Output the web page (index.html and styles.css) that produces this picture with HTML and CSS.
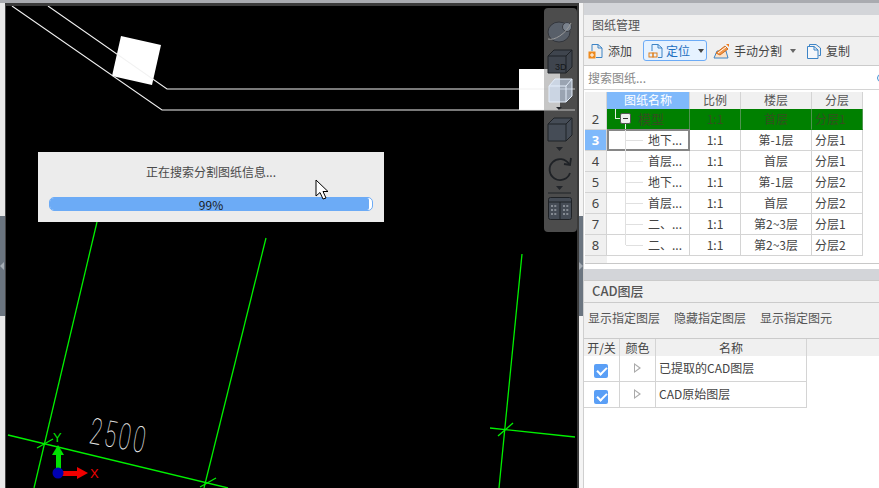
FILE: index.html
```html
<!DOCTYPE html>
<html lang="zh">
<head>
<meta charset="utf-8">
<title>图纸管理</title>
<link rel="stylesheet" href="styles.css">
</head>
<body>
<div class="app">
  <div class="topline"></div>
  <div class="main">
    <div class="gutter gutter-left"><div class="handle"><span class="handle-arrow arrow-left"></span></div></div>

    <div class="canvas">
      <svg class="drawing" viewBox="6 6 571 482" width="571" height="482">
        <rect x="519" y="69" width="41" height="41" fill="#fff"/>
        <polygon points="121,36 161,45 152,85 112,76" fill="#fff"/>
        <g fill="none" stroke="#f2f2f2" stroke-width="1.100">
          <polyline points="12,6 162,110 575,110"/>
          <polyline points="48,6 167,89 575,89"/>
        </g>
        <g fill="none" stroke="#00f000" stroke-width="1.300">
          <line x1="97" y1="222" x2="34" y2="488"/>
          <line x1="266" y1="238" x2="204" y2="488"/>
          <line x1="522" y1="254" x2="499" y2="488"/>
          <line x1="8" y1="435" x2="228" y2="488"/>
          <line x1="490" y1="428" x2="575" y2="437"/>
          <line x1="37" y1="448" x2="53" y2="439"/>
          <line x1="200" y1="487" x2="216" y2="478"/>
          <line x1="498" y1="436" x2="513" y2="423"/>
        </g>
        <text class="dim-text" transform="translate(88 443) rotate(10) scale(.85 1.4)">2500</text>
        <rect x="56" y="450" width="5" height="20" fill="#00e000"/>
        <polygon points="58,445 52,455 64,455" fill="#00e000"/>
        <rect x="60" y="471" width="20" height="5" fill="#f00000"/>
        <polygon points="88,473 77,467 77,479" fill="#f00000"/>
        <circle cx="58" cy="473" r="5.500" fill="#0000b4"/>
        <text class="axis axis-y" x="53" y="442">Y</text>
        <text class="axis axis-x" x="90" y="478">X</text>
      </svg>

      <div class="tools">
        <svg class="tool-icons" viewBox="0 0 33 224" width="33" height="224">
          <ellipse cx="15" cy="24" rx="11" ry="10" fill="#585f69" stroke="#33363c"/>
          <circle cx="23" cy="19" r="4.500" fill="#7a828d" stroke="#3a3d43"/>
          <path d="M4 31 C10 33 22 26 27 15" fill="none" stroke="#9a9a9a"/>
          <g stroke="#1f2226" stroke-width="1">
            <path d="M4 48 L10 42 H28 V59 L22 65 H4 Z" fill="#3f454e"/>
            <path d="M4 48 H22 V65 M22 48 L28 42" fill="none"/>
          </g>
          <text class="tool-3d" x="11" y="62">3D</text>
          <g stroke="#e4eefb" stroke-width="1">
            <path d="M5 78 L11 71 H28 V88 L22 94 H5 Z" fill="#cfe0f7" fill-opacity=".6"/>
            <path d="M5 78 H22 V94 M22 78 L28 71" fill="none"/>
          </g>
          <path d="M12 99 H18 L15 102 Z" fill="#22252a"/>
          <g stroke="#1f2226" stroke-width="1">
            <path d="M4 116 L10 110 H28 V127 L22 133 H4 Z" fill="#454c56"/>
            <path d="M4 116 H22 V133 M22 116 L28 110" fill="none"/>
          </g>
          <path d="M12 139 H19 L15.500 143 Z" fill="#22252a"/>
          <path d="M25 156 A10.500 10.500 0 1 0 26 165" fill="none" stroke="#1f2226" stroke-width="1.800"/>
          <path d="M20 156 L26 157 L27 150" fill="none" stroke="#1f2226" stroke-width="1.800"/>
          <path d="M12 178 H19 L15.500 182 Z" fill="#22252a"/>
          <line x1="4" y1="185" x2="27" y2="185" stroke="#1f2226"/>
          <rect x="4.500" y="189.500" width="23" height="22" rx="2" fill="#454c56" stroke="#1f2226"/>
          <path d="M5 194 H27 M16 194 V211" stroke="#1f2226"/>
          <path d="M7 198 H13 M7 202 H13 M7 206 H13 M19 198 H25 M19 202 H25 M19 206 H25" stroke="#c4c9d0" stroke-dasharray="2 1.300"/>
        </svg>
      </div>

      <div class="dialog">
        <div class="dialog-text">正在搜索分割图纸信息...</div>
        <div class="progress">
          <div class="progress-fill"></div>
          <span class="progress-text">99%</span>
        </div>
      </div>

      <svg class="cursor" viewBox="0 0 14 22" width="14" height="22">
        <path d="M1 1 V17 L5 13.500 L8 20 L11 19 L8 12.500 L13 12.500 Z" fill="#fff" stroke="#000" stroke-width="1"/>
      </svg>
    </div>

    <div class="gutter gutter-right"><div class="handle"><span class="handle-arrow arrow-right"></span></div></div>

    <div class="panel">
      <div class="band"></div>
      <div class="panel-title">图纸管理</div>
      <div class="toolbar">
        <span class="tbtn t-add">
          <svg class="ticon" viewBox="0 0 16 16" width="16" height="16"><path d="M4 8 V1.500 H10 L14 5 V14.500 H8" fill="none" stroke="#3d84c6"/><path d="M10 1.500 V5 H14" fill="none" stroke="#3d84c6"/><rect x="0.500" y="8.500" width="7" height="7" fill="#ee8a1d"/><path d="M4 10 V14 M2 12 H6" stroke="#fff"/></svg>
          添加
        </span>
        <span class="tbtn t-loc">
          <svg class="ticon" viewBox="0 0 16 16" width="16" height="16"><path d="M4 8 V1.500 H10 L14 5 V14.500 H10" fill="none" stroke="#3d84c6"/><path d="M10 1.500 V5 H14" fill="none" stroke="#3d84c6"/><rect x="1" y="10" width="4" height="4" fill="none" stroke="#e07f18"/><rect x="5" y="10" width="4" height="4" fill="none" stroke="#e07f18"/></svg>
          定位
          <span class="caret"></span>
        </span>
        <span class="tbtn t-split">
          <svg class="ticon" viewBox="0 0 17 16" width="17" height="16"><path d="M1 15 H15 L13 8 H4 Z" fill="#fbe3cb" stroke="#3d84c6"/><path d="M3 10 L12 3 L15 6 L7 12 Z" fill="#f2974a" stroke="#d06f20"/><path d="M5 10 L13 4" stroke="#fff"/><path d="M13 1 H16 V4 Z" fill="#ee7a1d"/></svg>
          手动分割
          <span class="caret caret-far"></span>
        </span>
        <span class="tbtn t-copy">
          <svg class="ticon" viewBox="0 0 16 16" width="16" height="16"><path d="M3.500 3 V1.500 H10 L14.500 5 V12.500 H12.500" fill="none" stroke="#3d84c6"/><path d="M1.500 3.500 H8 L12 7 V15.500 H1.500 Z" fill="#f4f7fb" stroke="#3d84c6"/><path d="M8 3.500 V7 H12" fill="none" stroke="#3d84c6"/></svg>
          复制
        </span>
      </div>
      <div class="search">
        <span class="search-text">搜索图纸...</span>
        <span class="search-icon"></span>
      </div>

      <div class="sheet">
        <div class="cell head corner"></div>
        <div class="cell head head-on">图纸名称</div>
        <div class="cell head">比例</div>
        <div class="cell head">楼层</div>
        <div class="cell head">分层</div>

        <div class="cell num">2</div>
        <div class="cell green name root"><span class="tree-l"></span><span class="minus"></span><span class="root-text">模型</span></div>
        <div class="cell green">1:1</div>
        <div class="cell green">首层</div>
        <div class="cell green left">分层1</div>

        <div class="cell num num-on">3</div>
        <div class="cell name child focus">地下...</div>
        <div class="cell">1:1</div>
        <div class="cell">第-1层</div>
        <div class="cell left">分层1</div>

        <div class="cell num">4</div>
        <div class="cell name child">首层...</div>
        <div class="cell">1:1</div>
        <div class="cell">首层</div>
        <div class="cell left">分层1</div>

        <div class="cell num">5</div>
        <div class="cell name child">地下...</div>
        <div class="cell">1:1</div>
        <div class="cell">第-1层</div>
        <div class="cell left">分层2</div>

        <div class="cell num">6</div>
        <div class="cell name child">首层...</div>
        <div class="cell">1:1</div>
        <div class="cell">首层</div>
        <div class="cell left">分层2</div>

        <div class="cell num">7</div>
        <div class="cell name child">二、...</div>
        <div class="cell">1:1</div>
        <div class="cell">第2~3层</div>
        <div class="cell left">分层1</div>

        <div class="cell num">8</div>
        <div class="cell name child last">二、...</div>
        <div class="cell">1:1</div>
        <div class="cell">第2~3层</div>
        <div class="cell left">分层2</div>

        <div class="num tail"></div>
      </div>

      <div class="gap"></div>
      <div class="band band-cad"></div>
      <div class="panel-title title-cad">CAD图层</div>
      <div class="layer-tools">
        <span>显示指定图层</span>
        <span>隐藏指定图层</span>
        <span>显示指定图元</span>
      </div>
      <div class="layers">
        <div class="lhead">开/关</div>
        <div class="lhead">颜色</div>
        <div class="lhead">名称</div>
        <div class="lhead-fill"></div>

        <div class="lcell"><span class="check"></span></div>
        <div class="lcell"><span class="tri"></span></div>
        <div class="lcell lname">已提取的CAD图层</div>

        <div class="lcell"><span class="check"></span></div>
        <div class="lcell"><span class="tri"></span></div>
        <div class="lcell lname">CAD原始图层</div>
      </div>
    </div>
  </div>
</div>
</body>
</html>
```

FILE: styles.css
```css
* { box-sizing: border-box; }
html, body { margin: 0; padding: 0; }
body {
  width: 879px;
  height: 488px;
  overflow: hidden;
  background: #fff;
  font-family: "Noto Sans CJK SC", "Noto Sans", sans-serif;
  font-size: 12px;
  color: #444;
}
.app { display: flex; flex-direction: column; height: 488px; }
.topline { height: 3px; background: #a9abb0; flex: none; }
.main { display: flex; flex: 1; min-height: 0; }

.gutter { flex: none; padding-top: 213px; }
.gutter-left { width: 5px; background: #e9e9e9; }
.gutter-right { width: 6px; background: #f4f4f4; border-left: 2px solid #3a3a3a; }
.handle {
  width: 100%;
  height: 100px;
  background: #6b7580;
  display: flex;
  align-items: center;
}
.handle-arrow { width: 0; height: 0; border-top: 4px solid transparent; border-bottom: 4px solid transparent; }
.arrow-left { border-right: 4px solid #a6adb5; }
.arrow-right { border-left: 4px solid #a6adb5; }

.canvas {
  position: relative;
  width: 572px;
  flex: none;
  background: #000;
  border-left: 1px solid #444;
  border-top: 3px solid #3a3a3a;
  overflow: hidden;
}
.drawing { display: block; }
.dim-text {
  font-family: Roboto, "Liberation Sans", sans-serif;
  font-weight: 100;
  font-size: 26px;
  fill: #ececec;
  letter-spacing: 3px;
}
.axis { font-family: "Liberation Sans", sans-serif; font-size: 13px; }
.axis-y { fill: #00e000; }
.axis-x { fill: #f00000; }

.tools {
  position: absolute;
  left: 538px;
  top: 2px;
  width: 33px;
  height: 224px;
  background: rgba(145, 145, 145, .52);
  border-radius: 4px;
}
.tool-icons { display: block; }
.tool-3d { font-family: "Liberation Sans", sans-serif; font-size: 9px; fill: #15171a; }

.dialog {
  position: absolute;
  left: 32px;
  top: 146px;
  width: 346px;
  height: 70px;
  background: #ececec;
  padding: 11px 11px 0;
}
.dialog-text { text-align: center; line-height: 17px; color: #4a4a4a; }
.progress {
  position: relative;
  margin-top: 17px;
  width: 324px;
  height: 14px;
  background: #fff;
  border: 1px solid #6cabf6;
  border-radius: 5px;
}
.progress-fill { width: 319px; height: 12px; background: #6cabf6; border-radius: 4px 2px 2px 4px; }
.progress-text {
  position: absolute;
  left: -1px;
  top: -2px;
  width: 324px;
  text-align: center;
  line-height: 17px;
  color: #1a1a1a;
}
.cursor { position: absolute; left: 309px; top: 173px; }

.panel {
  flex: 1;
  min-width: 0;
  border-left: 1px solid #cfcfcf;
  display: flex;
  flex-direction: column;
  background: #fff;
}
.band { height: 12px; background: #d3d5d9; flex: none; }
.panel-title {
  height: 22px;
  flex: none;
  background: #f0f0f0;
  border-bottom: 1px solid #cbcbcb;
  padding-left: 8px;
  line-height: 20px;
  color: #555;
}
.toolbar {
  height: 29px;
  flex: none;
  background: #f0f0f0;
  border-bottom: 1px solid #cbcbcb;
  display: flex;
  align-items: center;
  padding: 0 0 1px 4px;
}
.tbtn { display: flex; align-items: center; gap: 4px; height: 21px; white-space: nowrap; }
.ticon { flex: none; }
.t-loc {
  margin-left: 11px;
  width: 64px;
  padding-left: 4px;
  gap: 2px;
  border: 1px solid #6cabf6;
  border-radius: 3px;
  background: #e6f2ff;
  color: #1d6fc0;
}
.t-split { margin-left: 6px; width: 92px; }
.t-copy { margin-left: 1px; }
.caret {
  width: 0;
  height: 0;
  margin-left: 6px;
  border-left: 3px solid transparent;
  border-right: 3px solid transparent;
  border-top: 4px solid #444;
}
.caret-far { margin-left: 4px; border-top-color: #666; }

.search {
  height: 24px;
  flex: none;
  background: #fff;
  border-bottom: 1px solid #d4d4d4;
  padding-left: 4px;
  display: flex;
  align-items: center;
  justify-content: space-between;
  overflow: hidden;
}
.search-text { color: #888; }
.search-icon {
  width: 8px;
  height: 8px;
  flex: none;
  margin-right: -6px;
  border: 1.500px solid #3d8fd6;
  border-radius: 50%;
}

.sheet {
  margin-top: 2px;
  margin-left: 1px;
  flex: none;
  height: 172px;
  border-bottom: 1px solid #c8c8c8;
  display: grid;
  grid-template-columns: 22px 83px 51px 71px 51px 1fr;
  grid-template-rows: 17px repeat(7, 21px) 7px;
}
.cell {
  border-right: 1px solid #d4d4d4;
  border-bottom: 1px solid #d4d4d4;
  text-align: center;
  line-height: 20px;
  white-space: nowrap;
  position: relative;
}
.cell:nth-child(5n + 1) { grid-column: 1; }
.head { background: #f0f0f0; line-height: 16px; color: #555; border-bottom: 0; }
.head-on { background: #7fb9fb; color: #fff; }
.corner { background: #f0f0f0; }
.num { background: #f0f0f0; color: #444; font-family: "Noto Sans", sans-serif; font-size: 13px; }
.num-on { background: #7fb9fb; color: #fff; font-weight: 700; }
.tail { grid-column: 1; }
.left { text-align: left; padding-left: 3px; }
.green { background: #008000; color: #33501f; border-color: #008000; border-right-color: #4f944f; }
.name { text-align: left; padding-left: 41px; }
.child::before {
  content: "";
  position: absolute;
  left: 18px;
  top: -1px;
  bottom: -1px;
  border-left: 1px solid #e0e0e0;
}
.child.last::before { bottom: 10px; }
.child::after {
  content: "";
  position: absolute;
  left: 19px;
  top: 10px;
  width: 17px;
  border-top: 1px solid #e0e0e0;
}
.focus { border: 2px solid #868686; line-height: 18px; padding-left: 39px; margin-top: -1px; }
.focus::before { left: 16px; }
.focus::after { left: 17px; top: 9px; }
.root { padding-left: 31px; }
.root-text { font-size: 13px; }
.tree-l {
  position: absolute;
  left: 8px;
  top: 0;
  width: 5px;
  height: 10px;
  border-left: 1px solid #e4efe4;
  border-bottom: 1px solid #e4efe4;
}
.minus {
  position: absolute;
  left: 13px;
  top: 4px;
  width: 11px;
  height: 11px;
  background: #eee;
  border: 1px solid #555;
  border-radius: 2px;
}
.minus::after {
  content: "";
  position: absolute;
  left: 2px;
  top: 4px;
  width: 5px;
  border-top: 1px solid #333;
}
.root::after {
  content: "";
  position: absolute;
  left: 18px;
  top: 15px;
  bottom: 0;
  border-left: 1px solid #e4efe4;
}

.gap { height: 5px; flex: none; }
.title-cad { border-top: 1px solid #cbcbcb; height: 23px; font-weight: 500; font-size: 13px; }
.band-cad { height: 11px; }
.layer-tools {
  height: 36px;
  flex: none;
  background: #f0f0f0;
  border-bottom: 1px solid #cbcbcb;
  display: flex;
  gap: 14px;
  padding: 6px 0 0 4px;
  line-height: 18px;
  color: #555;
}
.layers {
  flex: none;
  display: grid;
  grid-template-columns: 36px 36px 151px 1fr;
  grid-template-rows: 17px 26px 26px;
}
.lhead {
  background: #f0f0f0;
  border-right: 1px solid #d4d4d4;
  text-align: center;
  line-height: 17px;
  color: #444;
}
.lhead-fill { background: #f0f0f0; }
.lcell {
  border-right: 1px solid #d4d4d4;
  border-bottom: 1px solid #d4d4d4;
  display: flex;
  align-items: center;
  justify-content: center;
}
.lcell.lname { justify-content: flex-start; padding-left: 3px; padding-bottom: 2px; }
.lname + .lcell { grid-column: 1; }
.check {
  position: relative;
  width: 14px;
  height: 14px;
  margin-top: 5px;
  margin-right: 2px;
  background: #5a9ff6;
  border-radius: 2px;
}
.check::after {
  content: "";
  position: absolute;
  left: 3px;
  top: 3px;
  width: 8px;
  height: 4px;
  border-left: 2px solid #fff;
  border-bottom: 2px solid #fff;
  transform: rotate(-45deg);
}
.tri {
  position: relative;
  width: 0;
  height: 0;
  margin-bottom: 2px;
  border-top: 5px solid transparent;
  border-bottom: 5px solid transparent;
  border-left: 7px solid #aaa;
}
.tri::after {
  content: "";
  position: absolute;
  left: -6px;
  top: -3px;
  border-top: 3px solid transparent;
  border-bottom: 3px solid transparent;
  border-left: 4px solid #fff;
}
```
